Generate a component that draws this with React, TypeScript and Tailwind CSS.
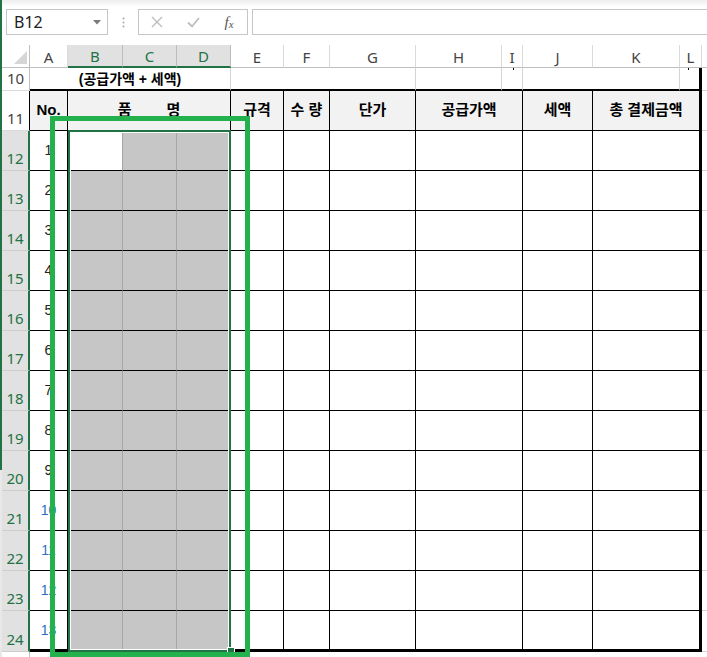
import React from "react";

const UI = "font-['Noto_Sans',sans-serif]";
const CELL = "font-['Liberation_Sans','Noto_Sans_CJK_KR',sans-serif]";
const COLS = "grid-cols-[28px_38px_55px_54px_54px_53px_46px_86px_86px_21px_70px_87px_22px_1fr]";
const ROWS = "grid-rows-[23px_23px_40px_repeat(12,40px)_41px_1fr]";

const letters = ["A", "B", "C", "D", "E", "F", "G", "H", "I", "J", "K", "L"];
const selected = ["B", "C", "D"];

function TopBar() {
  return (
    <div className={`flex h-[45px] shrink-0 items-start bg-linear-to-b from-[#ededed] via-white via-[15%] to-white pl-[4px] pt-[9px] ${UI}`}>
      <div className="flex h-[26px] w-[102px] items-center justify-between border border-[#c6c6c6] bg-white pl-[7px] pr-[6px]">
        <span className="text-[16px] leading-none text-[#222]">B12</span>
        <svg width="8" height="5" viewBox="0 0 8 5">
          <polygon points="0,0 8,0 4,4.5" fill="#7a7a7a" />
        </svg>
      </div>
      <div className="flex h-[26px] w-[30px] items-center justify-center">
        <svg width="3" height="11" viewBox="0 0 3 11">
          <circle cx="1.5" cy="1.5" r="1" fill="#a8a8a8" />
          <circle cx="1.5" cy="5.5" r="1" fill="#a8a8a8" />
          <circle cx="1.5" cy="9.5" r="1" fill="#a8a8a8" />
        </svg>
      </div>
      <div className="flex h-[26px] w-[110px] items-center border border-[#c6c6c6] bg-white">
        <div className="flex w-[36px] justify-center">
          <svg width="12" height="12" viewBox="0 0 12 12">
            <path d="M1 1 L11 11 M11 1 L1 11" stroke="#bdbdbd" strokeWidth="1.4" />
          </svg>
        </div>
        <div className="flex w-[36px] justify-center">
          <svg width="13" height="11" viewBox="0 0 13 11">
            <path d="M1 5.5 L5 9.5 L12 1" stroke="#bdbdbd" strokeWidth="1.8" fill="none" />
          </svg>
        </div>
        <div className="flex w-[36px] justify-center font-['Liberation_Serif',serif] italic text-[#555]">
          <span className="text-[15px] leading-none">f</span>
          <span className="mt-[4px] text-[11px] leading-none">x</span>
        </div>
      </div>
      <div className="ml-[4px] h-[26px] flex-1 border-y border-l border-[#c6c6c6] bg-white" />
    </div>
  );
}

function Cells() {
  const rows = Array.from({ length: 13 }, (_, i) => i + 1);
  return (
    <div className={`col-start-1 row-start-1 grid ${COLS} ${ROWS} ${CELL}`}>
      {/* column headers */}
      <div className="relative border-b border-r border-b-[#bfbfbf] border-r-[#bfbfbf] bg-white">
        <svg className="absolute bottom-[3px] right-[2px]" width="13" height="13" viewBox="0 0 13 13">
          <polygon points="13,0 13,13 0,13" fill="#d6d6d6" />
        </svg>
      </div>
      {letters.map((c) =>
        selected.includes(c) ? (
          <div
            key={c}
            className={`flex items-center justify-center border-b-2 border-r border-b-[#217346] border-r-[#bdbdbd] bg-[#e1e1e1] pt-[2px] text-[15px] leading-none text-[#217346] ${UI}`}
          >
            {c}
          </div>
        ) : (
          <div
            key={c}
            className={`flex items-center justify-center border-b border-r border-b-[#bfbfbf] border-r-[#dadada] bg-white pt-[2px] text-[15px] leading-none text-[#444] ${UI}`}
          >
            {c}
          </div>
        )
      )}
      <div className="border-b border-b-[#bfbfbf] bg-white" />

      {/* row 10 */}
      <div className={`flex items-end justify-center border-b border-r border-b-[#dadada] border-r-[#bfbfbf] pb-[4px] text-[15px] leading-none text-[#444] ${UI}`}>
        10
      </div>
      <div className="col-span-4 flex items-center justify-center border-b-2 border-r border-b-black border-r-[#d4d4d4] text-[14px] font-bold leading-none text-black">
        (공급가액 + 세액)
      </div>
      <div className="col-span-3 border-b-2 border-r border-b-black border-r-[#d4d4d4]" />
      <div className="border-b-2 border-r border-b-black border-r-[#d4d4d4]" />
      <div className="relative border-b-2 border-r border-b-black border-r-[#d4d4d4]">
        <span className="absolute left-[11px] top-0 h-[2px] w-[1px] bg-black" />
      </div>
      <div className="col-span-2 border-b-2 border-r border-b-black border-r-[#d4d4d4]" />
      <div className="relative border-b-2 border-r-[3px] border-b-black border-r-black">
        <span className="absolute left-[8px] top-0 h-[2px] w-[1px] bg-black" />
      </div>
      <div className="border-b border-b-[#d4d4d4]" />

      {/* row 11 */}
      <div className={`flex items-end justify-center border-b border-r border-b-[#dadada] border-r-black pb-[4px] text-[15px] leading-none text-[#444] ${UI}`}>
        11
      </div>
      <div className="flex items-center justify-center border-b border-r border-black bg-[#f2f2f2] text-[15px] font-bold">No.</div>
      <div className="col-span-3 flex items-center justify-center gap-[35px] border-b border-r border-black bg-[#f2f2f2] text-[15px] font-bold">
        <span>품</span>
        <span>명</span>
      </div>
      <div className="flex items-center justify-center border-b border-r border-black bg-[#f2f2f2] text-[15px] font-bold">규격</div>
      <div className="flex items-center justify-center border-b border-r border-black bg-[#f2f2f2] text-[15px] font-bold">수 량</div>
      <div className="flex items-center justify-center border-b border-r border-black bg-[#f2f2f2] text-[15px] font-bold">단가</div>
      <div className="col-span-2 flex items-center justify-center border-b border-r border-black bg-[#f2f2f2] text-[15px] font-bold">공급가액</div>
      <div className="flex items-center justify-center border-b border-r border-black bg-[#f2f2f2] text-[15px] font-bold">세액</div>
      <div className="col-span-2 flex items-center justify-center border-b border-r-[3px] border-black bg-[#f2f2f2] text-[15px] font-bold">총 결제금액</div>
      <div className="border-b border-b-[#d4d4d4]" />

      {/* rows 12 - 24 */}
      {rows.map((n) => {
        const bb = n === 13 ? "border-b-[3px] border-b-black" : "border-b border-b-black";
        return (
          <React.Fragment key={n}>
            <div
              className={`flex items-end justify-center border-b border-r-2 border-b-[#cdcdcd] border-r-[#217346] bg-[#e1e1e1] pb-[4px] text-[15px] leading-none text-[#217346] ${UI}`}
            >
              {11 + n}
            </div>
            <div className={`flex items-center justify-center border-r border-r-black ${bb} text-[14px] ${n >= 10 ? "text-[#2f6fc0]" : "text-[#222]"}`}>
              {n}
            </div>
            <div className={`${n === 1 ? "bg-white" : "bg-[#c6c6c6]"} border-r border-r-[#a6a6a6] ${bb}`} />
            <div className={`bg-[#c6c6c6] border-r border-r-[#a6a6a6] ${bb}`} />
            <div className={`bg-[#c6c6c6] border-r border-r-black ${bb}`} />
            <div className={`border-r border-r-black ${bb}`} />
            <div className={`border-r border-r-black ${bb}`} />
            <div className={`border-r border-r-black ${bb}`} />
            <div className={`col-span-2 border-r border-r-black ${bb}`} />
            <div className={`border-r border-r-black ${bb}`} />
            <div className={`col-span-2 border-r-[3px] border-r-black ${bb}`} />
            <div className="border-b border-b-[#d4d4d4]" />
          </React.Fragment>
        );
      })}

      {/* row 25 (cut off) */}
      <div className="border-r border-r-[#bfbfbf] bg-white" />
      <div className="col-span-13 bg-white" />
    </div>
  );
}

function SelectionLayer() {
  // same tracks as the cells, so the selection box lines up with B12:D24
  return (
    <div className={`pointer-events-none col-start-1 row-start-1 grid ${COLS} ${ROWS}`}>
      <div className="relative col-start-3 col-end-6 row-start-4 row-end-17 -mt-px border-2 border-[#217346] shadow-[inset_0_0_0_1px_#ffffff]">
        <div className="absolute -bottom-[4px] -right-[5px] h-[6px] w-[6px] bg-[#217346] shadow-[0_0_0_1px_#ffffff]" />
      </div>
    </div>
  );
}

export default function App() {
  return (
    <div className="relative flex h-[657px] w-full overflow-hidden bg-white">
      <div className="flex w-[2px] shrink-0 flex-col">
        <div className="h-[470px] bg-[#217346]" />
        <div className="flex-1 bg-[#e8e8e8]" />
      </div>
      <div className="flex min-w-0 flex-1 flex-col">
        <TopBar />
        <div className="grid flex-1">
          <Cells />
          <SelectionLayer />
        </div>
      </div>
      <div className="pointer-events-none absolute left-[50px] top-[116px] h-[541px] w-[200px] border-[5px] border-[#22b14c]" />
    </div>
  );
}
